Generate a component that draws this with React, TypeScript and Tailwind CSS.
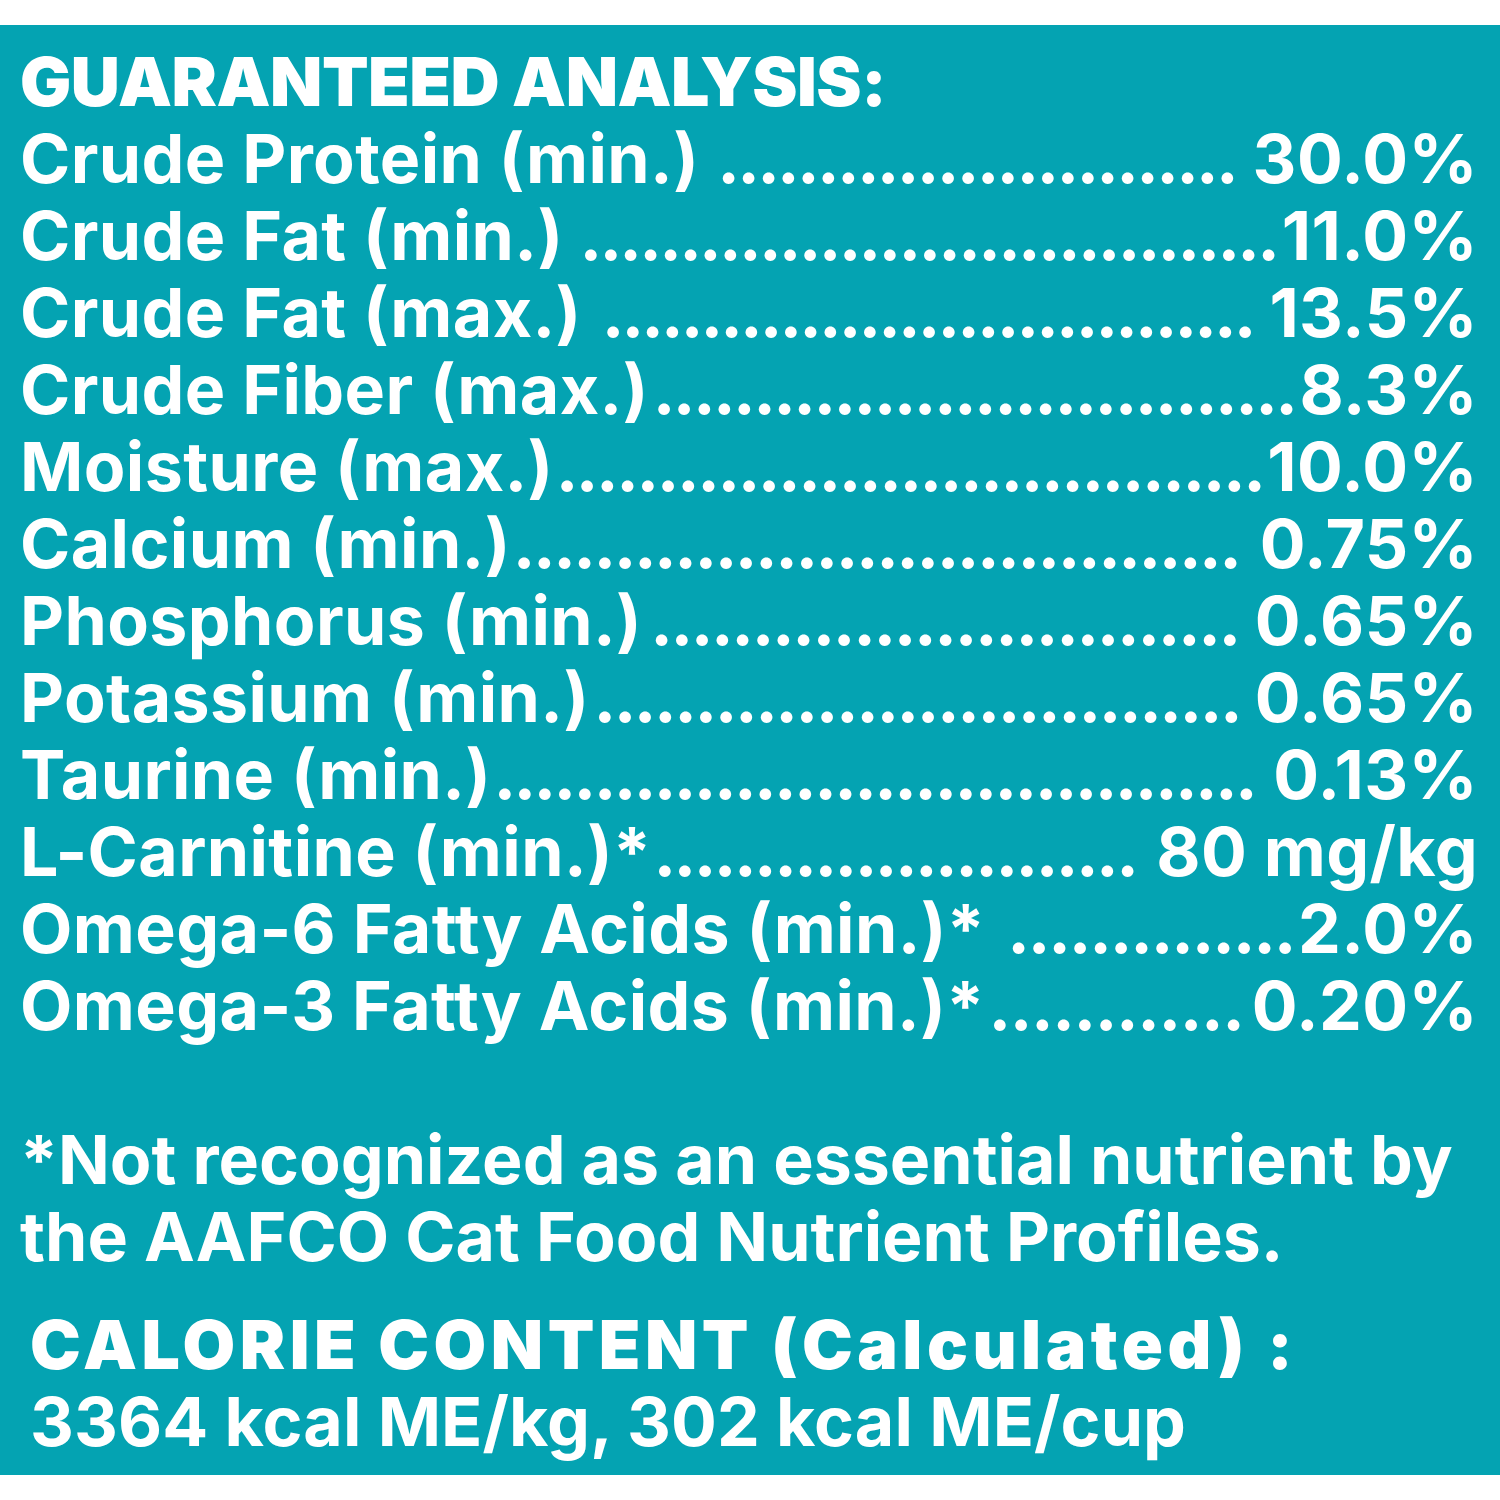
import { useLayoutEffect, useRef, useState } from 'react';

const rows = [
  { label: 'Crude Protein (min.)', value: '30.0%', lead: 'pl-[18px] pr-[12px]' },
  { label: 'Crude Fat (min.)', value: '11.0%', lead: 'pl-[16px] pr-0' },
  { label: 'Crude Fat (max.)', value: '13.5%', lead: 'pl-[20px] pr-[12px]' },
  { label: 'Crude Fiber (max.)', value: '8.3%', lead: 'pl-[4px] pr-0' },
  { label: 'Moisture (max.)', value: '10.0%', lead: 'pl-[2px] pr-0' },
  { label: 'Calcium (min.)', value: '0.75%', lead: 'pl-[2px] pr-[16px]' },
  { label: 'Phosphorus (min.)', value: '0.65%', lead: 'pl-[8px] pr-[12px]' },
  { label: 'Potassium (min.)', value: '0.65%', lead: 'pl-[4px] pr-[10px]' },
  { label: 'Taurine (min.)', value: '0.13%', lead: 'pl-[2px] pr-[14px]' },
  { label: 'L-Carnitine (min.)*', value: '80 mg/kg', lead: 'pl-[2px] pr-[16px]' },
  { label: 'Omega-6 Fatty Acids (min.)*', value: '2.0%', lead: 'pl-[22px] pr-0' },
  { label: 'Omega-3 Fatty Acids (min.)*', value: '0.20%', lead: 'pl-[4px] pr-[4px]' },
];

// fills the gap with whole dots, spread evenly across it
function Leader({ className }: { className: string }) {
  const box = useRef<HTMLDivElement>(null);
  const dots = useRef<HTMLSpanElement>(null);
  const [fill, setFill] = useState({ count: 1, spacing: -3 });

  useLayoutEffect(() => {
    if (!box.current || !dots.current) return;
    const pitch = dots.current.getBoundingClientRect().width;
    const w = box.current.clientWidth - 4;
    const count = Math.max(0, Math.floor(w / pitch));
    const extra = count ? (w - count * pitch) / count : 0;
    setFill({ count, spacing: -3 + extra });
  }, []);

  return (
    <div className={`flex-1 min-w-0 ${className}`}>
      <div ref={box} className="flex">
        <span ref={dots} className="inline-block" style={{ letterSpacing: `${fill.spacing}px` }}>
          {'.'.repeat(fill.count)}
        </span>
      </div>
    </div>
  );
}

function Row({ label, value, lead }: { label: string; value: string; lead: string }) {
  return (
    <div className="flex items-baseline h-[77px] leading-[77px] whitespace-nowrap">
      <span>{label}</span>
      <Leader className={lead} />
      <span>{value}</span>
    </div>
  );
}

export default function App() {
  return (
    <div className="w-[1500px] h-[1500px] bg-white pt-[25px] font-['Inter',sans-serif] text-white">
      <div className="h-[1450px] bg-[#04a3b2] pl-[20px] pr-[22px] pt-[18px] text-[68px] font-bold tracking-[0.4px]">
        <div className="h-[77px] leading-[77px] font-black tracking-[-0.5px]">GUARANTEED ANALYSIS:</div>
        {rows.map((r) => (
          <Row key={r.label} {...r} />
        ))}
        <div className="mt-[77px] leading-[77px] tracking-normal">
          <p>*Not recognized as an essential nutrient by</p>
          <p>the AAFCO Cat Food Nutrient Profiles.</p>
        </div>
        <div className="mt-[31px] pl-[10px] leading-[77px]">
          <p className="font-black tracking-[4.5px]">CALORIE CONTENT (Calculated) :</p>
          <p className="tracking-[0.1px]">3364 kcal ME/kg, 302 kcal ME/cup</p>
        </div>
      </div>
    </div>
  );
}
